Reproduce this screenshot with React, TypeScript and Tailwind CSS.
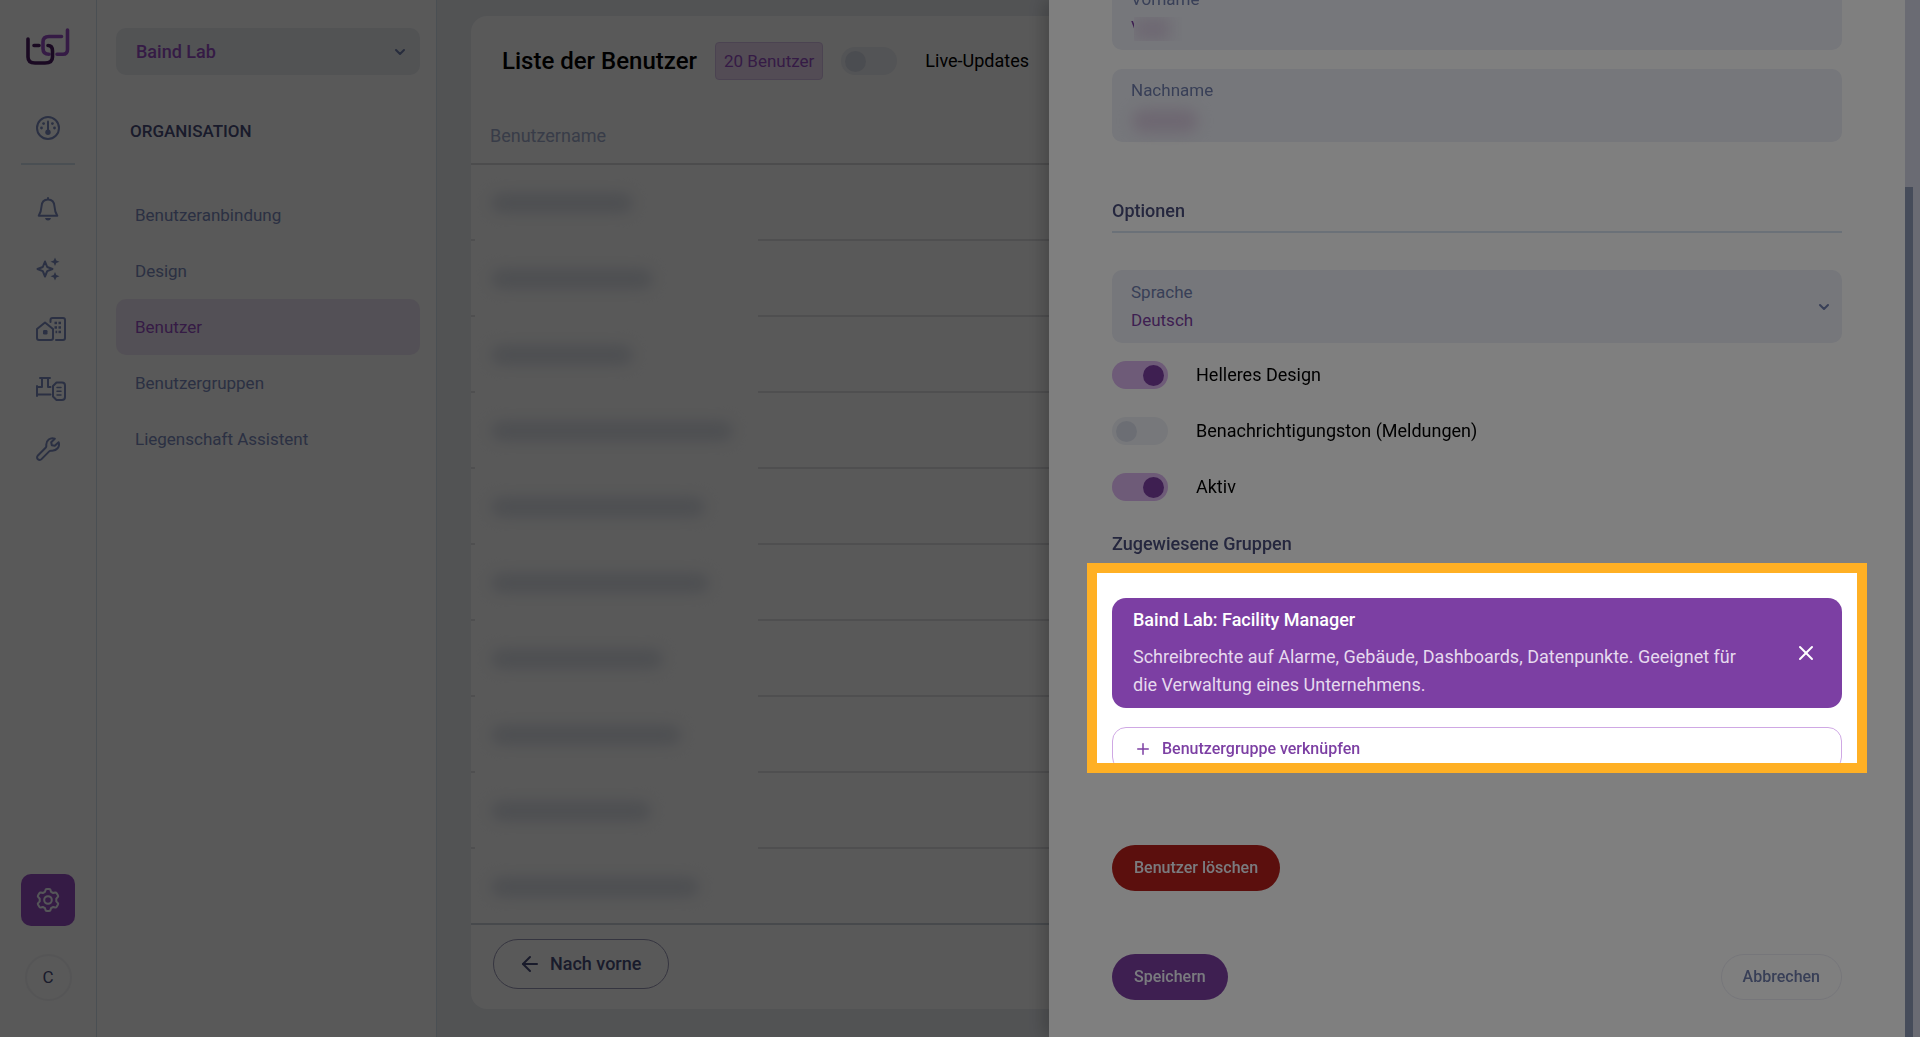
import React, { useState } from 'react';
import { ArrowLeft, ChevronDown, Plus, X } from 'lucide-react';

const navItems = ['Benutzeranbindung', 'Design', 'Benutzer', 'Benutzergruppen', 'Liegenschaft Assistent'];

// widths of the redacted user names
const userRows = [142, 162, 142, 242, 214, 218, 172, 190, 160, 208];

const Logo: React.FC = () => (
  <svg width="44" height="38" viewBox="0 0 44 38" fill="none" strokeWidth="3.6" strokeLinecap="round">
    <path
      d="M35.500 8.500H23C19 8.500 17 10.500 17 14V20.500C17 24.500 19 26.300 23 26.300M31 26.300H37C40.500 26.300 41.500 24.500 41.500 21.500V2"
      stroke="#9a50c8"
    />
    <path
      d="M2 11V29C2 33 4 35 9 35H19C24.500 35 26.500 33 26.500 29V23C26.500 19 25 17.500 22 17.500M8 17.500H13"
      stroke="#4b1c63"
    />
  </svg>
);

const iconProps = {
  fill: 'none',
  stroke: 'currentColor',
  strokeWidth: 2,
  strokeLinecap: 'round' as const,
  strokeLinejoin: 'round' as const,
};

const GaugeIcon: React.FC = () => (
  <svg width="24" height="24" viewBox="0 0 24 24" {...iconProps}>
    <circle cx="12" cy="12" r="11" />
    <path d="M12 5.500V14" />
    <g fill="currentColor" stroke="none">
      <circle cx="12" cy="16.300" r="2.700" />
      <circle cx="7.600" cy="7.600" r="1.400" />
      <circle cx="16.400" cy="7.600" r="1.400" />
      <circle cx="5.500" cy="12" r="1.400" />
      <circle cx="18.500" cy="12" r="1.400" />
    </g>
  </svg>
);

const BellIcon: React.FC = () => (
  <svg width="24" height="24" viewBox="0 0 24 24" {...iconProps}>
    <path d="M12 2.500C8 2.500 5.700 5.500 5.500 9.500C5.300 13.500 4.700 15.500 2.700 18.700H21.300C19.300 15.500 18.700 13.500 18.500 9.500C18.300 5.500 16 2.500 12 2.500ZM12 2.500V1" />
    <path d="M9 21H15C14.600 22.700 13.500 23.500 12 23.500C10.500 23.500 9.400 22.700 9 21Z" fill="currentColor" stroke="none" />
  </svg>
);

const SparklesIcon: React.FC = () => (
  <svg width="24" height="24" viewBox="0 0 24 24" {...iconProps}>
    <path d="M9 4.500L11.200 10L16.500 12L11.200 14.200L9 19.500L6.800 14.200L1.500 12L6.800 10Z" />
    <g fill="currentColor" stroke="none">
      <path d="M19 0.500L20.300 3.500L23.500 4.800L20.300 6.100L19 9.100L17.700 6.100L14.500 4.800L17.700 3.500Z" />
      <path d="M19 15L20.300 18L23.500 19.300L20.300 20.600L19 23.600L17.700 20.600L14.500 19.300L17.700 18Z" />
    </g>
  </svg>
);

const BuildingIcon: React.FC = () => (
  <svg width="30" height="24" viewBox="0 0 30 24" {...iconProps}>
    <path d="M1 12L9 5.500L17 12V21Q17 23 15 23H3Q1 23 1 21Z" />
    <path d="M14.500 5V3Q14.500 1 16.500 1H27Q29 1 29 3V21Q29 23 27 23H20" />
    <g fill="currentColor" stroke="none">
      <rect x="7" y="13" width="4.500" height="4.500" rx="1.200" />
      <rect x="18.500" y="4.700" width="2.500" height="2.500" />
      <rect x="22.500" y="4.700" width="2.500" height="2.500" />
      <rect x="18.500" y="9.200" width="2.500" height="2.500" />
      <rect x="22.500" y="9.200" width="2.500" height="2.500" />
      <rect x="19.500" y="13.700" width="1.700" height="2.500" />
      <rect x="22.500" y="13.700" width="2.500" height="2.500" />
    </g>
  </svg>
);

const ValveIcon: React.FC = () => (
  <svg width="30" height="24" viewBox="0 0 30 24" {...iconProps}>
    <path d="M4 1H14M6 1V10H1M12 1V10H14.500M1 9V19M1 17.500H14.500" />
    <path d="M20.500 5.500H26Q29 5.500 29 8.500V20Q29 23 26 23H20.500L17 19.500V9Z" />
    <path d="M21 10.500H25M21 14.300H25M21 18H25" strokeWidth="1.500" />
  </svg>
);

const WrenchIcon: React.FC = () => (
  <svg width="24" height="24" viewBox="0 0 24 24" {...iconProps}>
    <path d="M18.800 1.700C14.500 0 9.700 3.200 10.300 8.700C10.400 9.600 10.200 10.200 9.600 10.800L1.900 18.500C.8 19.600 .8 21.200 1.900 22.200C3 23.200 4.500 23.200 5.500 22.100L13.200 14.400C13.800 13.800 14.500 13.600 15.300 13.700C20.700 14.200 24.200 9.500 22.600 5.200L18.800 8.800L15.800 8.200L15.200 5.200Z" />
  </svg>
);

const GearIcon: React.FC = () => (
  <svg width="24" height="24" viewBox="0 0 24 24" {...iconProps}>
    <path d="M9.600 1.800Q10 1 11 1H13Q14 1 14.400 1.800L15 3.800L17.200 5L19.200 4.500Q20.200 4.400 20.700 5.200L22 7.400Q22.500 8.300 21.800 9L20.300 10.600V13.400L21.800 15Q22.500 15.700 22 16.600L20.700 18.800Q20.200 19.600 19.200 19.500L17.200 19L15 20.200L14.400 22.200Q14 23 13 23H11Q10 23 9.600 22.200L9 20.200L6.800 19L4.800 19.500Q3.800 19.600 3.300 18.800L2 16.600Q1.500 15.700 2.200 15L3.700 13.400V10.600L2.200 9Q1.500 8.300 2 7.400L3.300 5.200Q3.800 4.400 4.800 4.500L6.800 5L9 3.800Z" />
    <circle cx="12" cy="12" r="3.800" />
  </svg>
);

const railItems = [
  { label: 'Meldungen', icon: <BellIcon /> },
  { label: 'Assistent', icon: <SparklesIcon /> },
  { label: 'Liegenschaften', icon: <BuildingIcon /> },
  { label: 'Anlagen', icon: <ValveIcon /> },
  { label: 'Wartung', icon: <WrenchIcon /> },
];

const Rail: React.FC = () => (
  <aside className="flex w-[97px] shrink-0 flex-col items-center border-r border-[#d6e3f0] bg-white pt-7 pb-9 text-[#7c8cc0]">
    <Logo />
    <a href="#dashboard" aria-label="Dashboard" className="mt-[50px]">
      <GaugeIcon />
    </a>
    <div className="mt-[23px] h-0.5 w-[54px] bg-[#d6e3f0]" />
    <nav className="mt-3.5 flex flex-col self-stretch">
      {railItems.map((item) => (
        <a key={item.label} href="#rail" aria-label={item.label} className="flex h-[60px] items-center pl-9">
          {item.icon}
        </a>
      ))}
    </nav>
    <a
      href="#settings"
      aria-label="Einstellungen"
      className="mt-auto flex h-[52px] w-[54px] items-center justify-center rounded-[10px] bg-[#9a50c8] text-[#f4f7fe]"
    >
      <GearIcon />
    </a>
    <button
      type="button"
      className="mt-7 h-[47px] w-[47px] rounded-full border-2 border-[#f4f4f6] text-[17px] text-[#4a4e7d]"
    >
      C
    </button>
  </aside>
);

const OrganisationPanel: React.FC = () => (
  <aside className="w-[340px] shrink-0 border-r border-[#d6e3f0] bg-white pt-7 pr-4 pl-[19px]">
    <div className="relative">
      <select
        aria-label="Organisation"
        className="h-[47px] w-full appearance-none rounded-[10px] bg-[#ebeef3] px-5 text-lg font-medium text-[#9a50c8]"
      >
        <option>Baind Lab</option>
      </select>
      <ChevronDown className="pointer-events-none absolute top-4 right-3 h-4 w-4 text-[#707eae]" strokeWidth={3} />
    </div>
    <h2 className="mt-[42px] pl-3.5 text-[17px] leading-7 font-medium text-[#4a4e7d]">ORGANISATION</h2>
    <nav className="mt-[42px] flex flex-col">
      {navItems.map((item) => (
        <a
          key={item}
          href="#organisation"
          className={`flex h-14 items-center rounded-[10px] px-[19px] pt-0.5 text-[17px] ${
            item === 'Benutzer' ? 'bg-[#f0e7f6] text-[#9a50c8]' : 'text-[#7c8cc0]'
          }`}
        >
          {item}
        </a>
      ))}
    </nav>
  </aside>
);

interface ToggleProps {
  label: string;
  defaultChecked?: boolean;
}

const Toggle: React.FC<ToggleProps> = ({ label, defaultChecked = false }) => {
  const [checked, setChecked] = useState(defaultChecked);

  return (
    <label className="flex h-7 items-center gap-7 text-lg text-black">
      <input
        type="checkbox"
        role="switch"
        checked={checked}
        onChange={(e) => setChecked(e.target.checked)}
        className="flex h-7 w-14 shrink-0 appearance-none items-center rounded-full bg-[#eff1f6] px-1 before:h-[21px] before:w-[21px] before:rounded-full before:bg-[#d8dde9] checked:justify-end checked:bg-[#dcb6f0] checked:before:bg-[#7c3fa3]"
      />
      {label}
    </label>
  );
};

const UserList: React.FC = () => (
  <main className="min-w-0 flex-1 bg-[#ebeef3] px-[34px] pt-4 pb-7">
    <section className="flex h-full flex-col rounded-2xl bg-white">
      <header className="flex h-[88px] shrink-0 items-center pt-0.5 pl-[31px]">
        <h1 className="text-2xl font-medium text-black">Liste der Benutzer</h1>
        <span className="mx-[18px] rounded border border-[#d9c2ea] bg-[#efdaf5] px-2 py-1 text-[17px] leading-7 text-[#9a50c8]">
          20 Benutzer
        </span>
        <Toggle label="Live-Updates" />
      </header>
      <table className="w-full text-left">
        <thead>
          <tr>
            <th className="h-[60px] border-b-2 border-[#dcdcdf] pt-1 pl-[19px] text-lg font-normal text-[#a3aed0]">
              Benutzername
            </th>
          </tr>
        </thead>
        <tbody>
          {userRows.map((width, index) => (
            <tr key={index}>
              <td
                className={`relative h-[76px] border-b-2 ${
                  index === userRows.length - 1 ? 'border-[#ccd3dc]' : 'border-[#e2e2e5]'
                }`}
              >
                {index < userRows.length - 1 && (
                  <span className="absolute top-6 left-1 h-[60px] w-[283px] bg-white" />
                )}
                <span
                  className="absolute top-7 left-5 h-5 rounded-full bg-[#dfe3eb] blur-[7px]"
                  style={{ width }}
                />
              </td>
            </tr>
          ))}
        </tbody>
      </table>
      <div className="px-[22px] pt-3.5">
        <button
          type="button"
          className="flex h-[50px] items-center gap-2 rounded-full border border-[#9a98b8] pr-[27px] pl-6 text-lg font-medium text-[#4a4e7d]"
        >
          <ArrowLeft className="h-6 w-6" strokeWidth={2} />
          Nach vorne
        </button>
      </div>
    </section>
  </main>
);

const fieldLabel = 'block text-[17px] leading-7 text-[#707eae]';

const UserDrawer: React.FC = () => (
  <div className="fixed inset-y-0 right-0 z-20 flex w-[871px] max-w-full bg-white shadow-[-6px_0_16px_rgba(0,0,0,0.2)]">
    <form className="-mt-[23px] min-w-0 flex-1 px-[63px]" onSubmit={(e) => e.preventDefault()}>
      <div className="relative h-[73px] rounded-[10px] bg-[#eceef6] px-[19px] pt-2">
        <label htmlFor="vorname" className={fieldLabel}>
          Vorname
        </label>
        <input
          id="vorname"
          defaultValue="V"
          className="block h-7 w-full bg-transparent text-[17px] text-[#7c3fa3]"
        />
        <span className="absolute top-10 left-[22px] h-6 w-12 overflow-hidden bg-[#eceef6]">
          <span className="block h-6 w-9 bg-[#ddd2e6] blur-[7px]" />
        </span>
      </div>
      <div className="relative mt-[19px] h-[73px] rounded-[10px] bg-[#eceef6] px-[19px] pt-[7px]">
        <label htmlFor="nachname" className={fieldLabel}>
          Nachname
        </label>
        <input id="nachname" className="block h-7 w-full bg-transparent text-[17px] text-[#7c3fa3]" />
        <span className="absolute top-10 left-5 h-6 w-[66px] rounded-full bg-[#dccfe3] blur-[7px]" />
      </div>

      <h3 className="mt-[55px] border-b-2 border-[#d6e3f0] pb-1.5 text-lg leading-7 font-medium text-[#4a4e7d]">
        Optionen
      </h3>
      <div className="relative mt-[37px] h-[73px] rounded-[10px] bg-[#eceef6] px-[19px] pt-2">
        <label htmlFor="sprache" className={fieldLabel}>
          Sprache
        </label>
        <select id="sprache" className="block h-[30px] w-full appearance-none bg-transparent text-[17px] text-[#7c3fa3]">
          <option>Deutsch</option>
          <option>English</option>
        </select>
        <ChevronDown
          className="pointer-events-none absolute top-[29px] right-2.5 h-4 w-4 text-[#707eae]"
          strokeWidth={3}
        />
      </div>
      <div className="mt-[18px] flex flex-col gap-7">
        <Toggle label="Helleres Design" defaultChecked />
        <Toggle label="Benachrichtigungston (Meldungen)" />
        <Toggle label="Aktiv" defaultChecked />
      </div>

      <h3 className="mt-[29px] text-lg leading-7 font-medium text-[#4a4e7d]">Zugewiesene Gruppen</h3>
      <div className="relative mt-10">
        <div className="flex items-center justify-between rounded-[14px] bg-[#7c3fa3] pt-2 pr-6 pb-[9px] pl-[21px] text-white">
          <div className="max-w-[628px] text-lg leading-7">
            <h4 className="font-medium">Baind Lab: Facility Manager</h4>
            <p className="mt-[9px] text-[#e6d9ee]">
              Schreibrechte auf Alarme, Gebäude, Dashboards, Datenpunkte. Geeignet für die Verwaltung eines
              Unternehmens.
            </p>
          </div>
          <button type="button" aria-label="Gruppe entfernen">
            <X className="h-6 w-6" strokeWidth={2} />
          </button>
        </div>
        <button
          type="button"
          className="mt-[19px] flex h-11 w-full items-center gap-2.5 rounded-[14px] border border-[#cfa8e4] px-[21px] text-base font-medium text-[#7c3fa3]"
        >
          <Plus className="h-[18px] w-[18px]" strokeWidth={2} />
          Benutzergruppe verknüpfen
        </button>
        {/* Spotlight around the assigned groups, dims everything else */}
        <div className="pointer-events-none absolute -inset-x-[25px] -top-[35px] -bottom-0.5 z-10 border-[10px] border-[#ffb024] shadow-[0_0_0_9999px_rgba(0,0,0,0.5)]" />
      </div>

      <button
        type="button"
        className="mt-[74px] block h-[46px] rounded-full bg-[#b61e1a] px-[22px] text-base font-medium text-[#f4f7fe]"
      >
        Benutzer löschen
      </button>
      <div className="mt-[63px] flex justify-between">
        <button type="submit" className="h-[46px] rounded-full bg-[#7c3fa3] px-[22px] text-base font-medium text-[#f4f7fe]">
          Speichern
        </button>
        <button
          type="button"
          className="h-[46px] rounded-full border border-[#ececf4] px-[21px] text-base font-medium text-[#707eae]"
        >
          Abbrechen
        </button>
      </div>
    </form>
    <div className="w-[15px] bg-[#d4d6e6] pt-[187px]">
      <div className="h-full w-2 bg-[#8c98b4]" />
    </div>
  </div>
);

export default function App() {
  return (
    <div className="relative flex h-screen overflow-hidden bg-white font-[Roboto,sans-serif]">
      <Rail />
      <OrganisationPanel />
      <UserList />
      <div className="fixed inset-0 z-10 bg-black/30" />
      <UserDrawer />
    </div>
  );
}
